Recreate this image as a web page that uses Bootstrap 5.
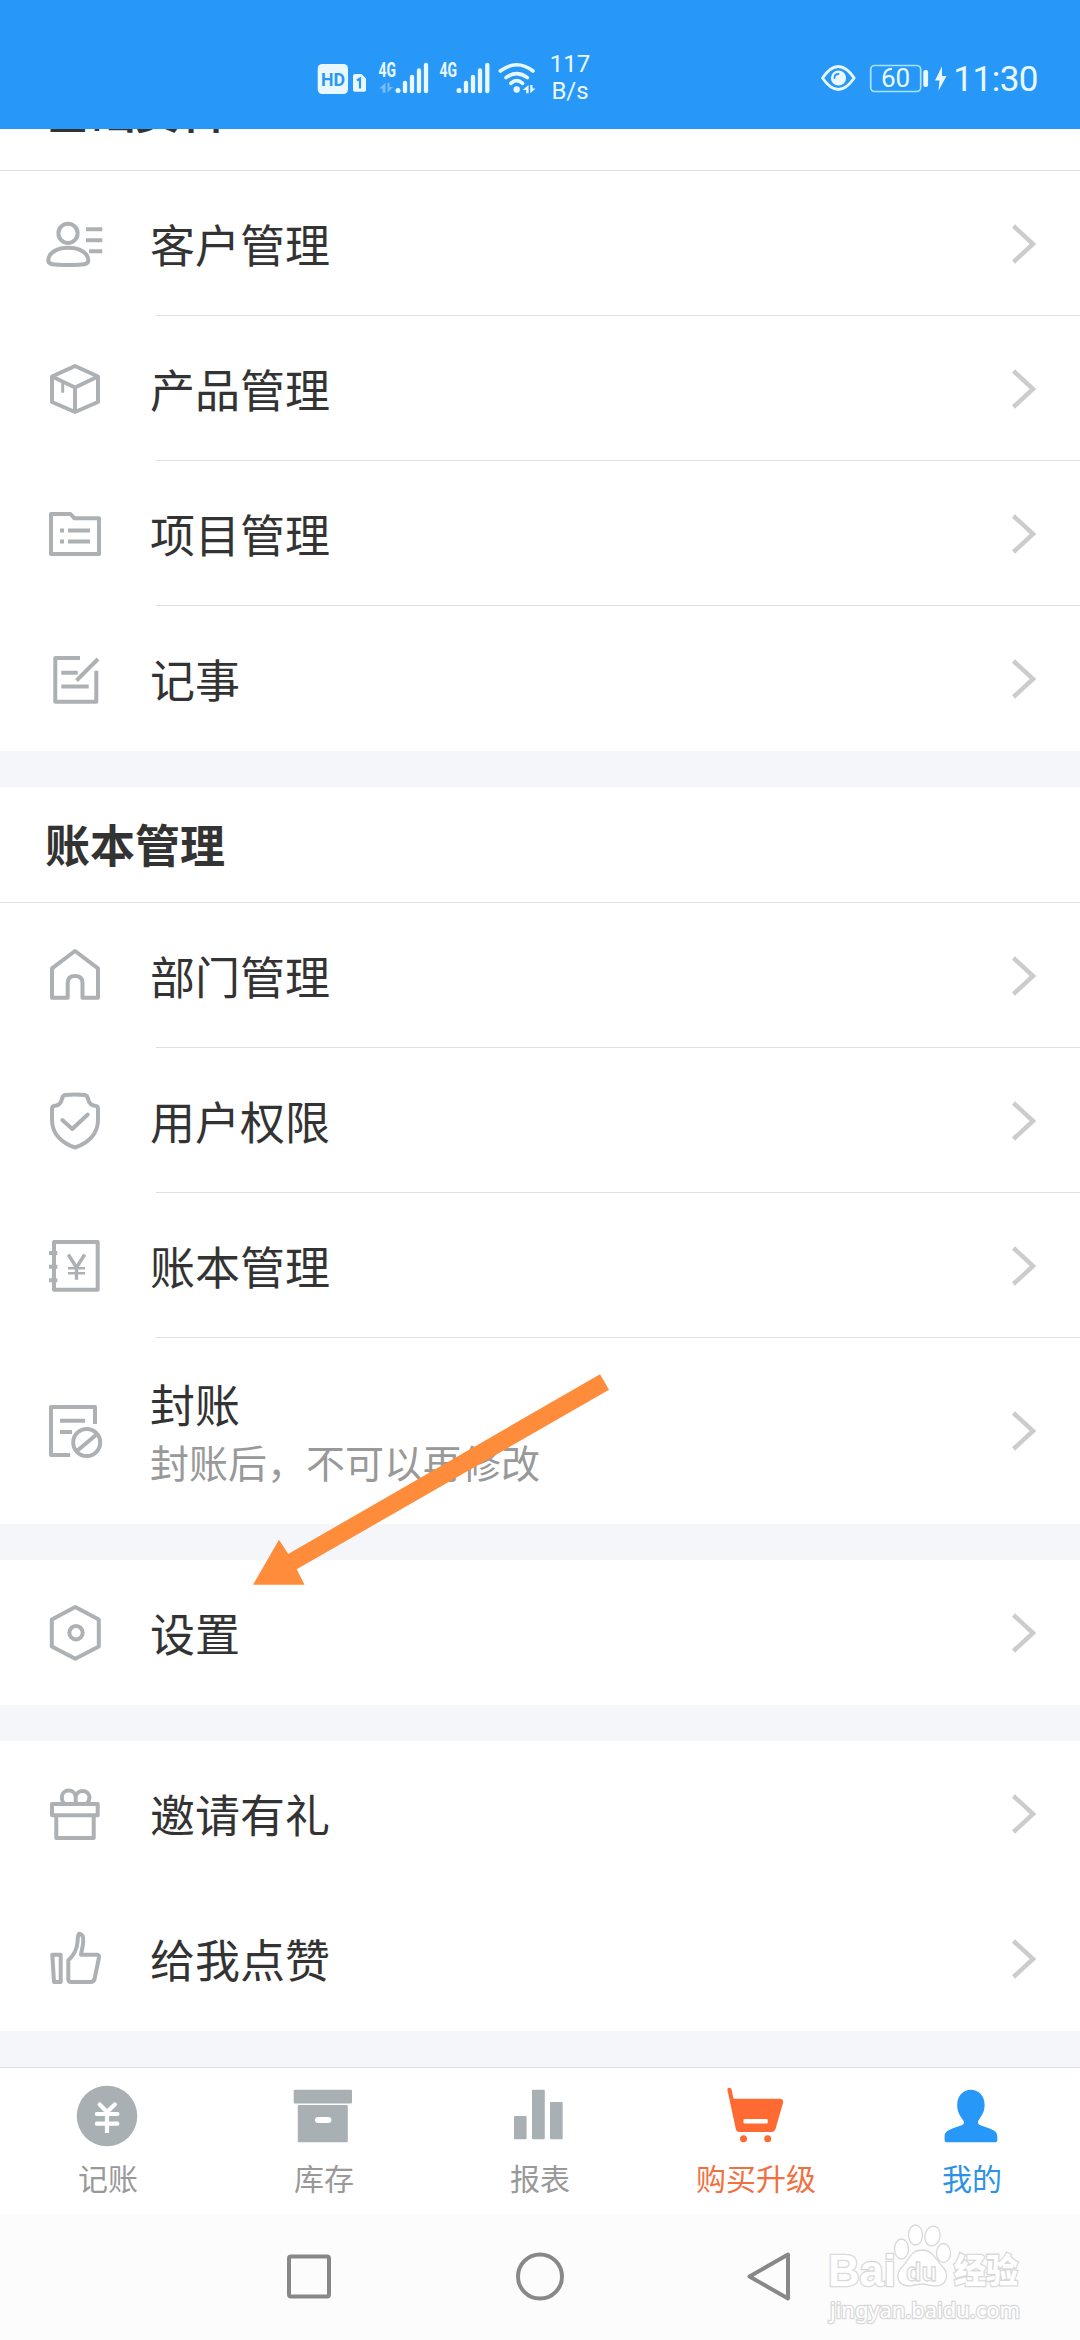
<!DOCTYPE html>
<html lang="zh-CN">
<head>
<meta charset="utf-8">
<meta name="viewport" content="width=device-width, initial-scale=1">
<title>我的</title>
<link rel="stylesheet" href="https://cdn.jsdelivr.net/npm/bootstrap@5.3.0/dist/css/bootstrap.min.css">
<style>
  body { width: 1080px; height: 2340px; overflow: hidden; background: #f5f6fa; color: #333; font-family: Roboto, "Noto Sans CJK SC", sans-serif; }
  svg { display: block; flex: none; }
  .statusbar { height: 129px; background: #2898f8; color: #e9f8ff; padding: 50px 42px 0 310px; }
  .statusbar > svg { margin-top: 5px; }
  .statusbar svg text { font-family: Roboto, sans-serif; }
  .rate { width: 60px; font-size: 24px; line-height: 27px; margin-left: -12px; margin-top: 1px; }
  .clock { font-size: 35px; line-height: 45px; letter-spacing: -.5px; margin-top: 6.5px; margin-left: 2px; }
  .block-title { height: 116px; padding: 6px 45px 0; font-size: 45px; font-weight: 700; line-height: 1; border-bottom: 1px solid #dedfe0; }
  .clipped { height: 42px; overflow: hidden; }
  .clipped > .block-title { flex: none; width: 100%; padding-top: 2px; }
  .entry { height: 145px; padding: 0 43px 0 45px; font-size: 45px; line-height: 1; }
  .entry-tall { height: 186px; }
  .entry > svg { stroke: #adb1b4; stroke-width: 4; fill: none; stroke-linejoin: round; }
  .entry > svg.chev { stroke: #ccc; stroke-width: 4.5; stroke-linejoin: miter; margin-left: auto; }
  .entry-label { margin-left: 45px; padding-top: 7px; }
  .entry-note { font-size: 39px; color: #999; margin-top: 16px; }
  .rule { height: 1px; margin: -1px 0 0 156px; background: #dedfe0; }
  .tabs { height: 147px; border-top: 1px solid #dcdfe3; }
  .tab-entry { width: 216px; padding-top: 16px; font-size: 30px; line-height: 30px; color: #999; }
  .tab-entry span { margin-top: 17px; }
  .tab-entry svg { fill: #a9b0b4; }
  .sysnav { height: 126px; background: #fcfcfc; padding: 0 0 0 279px; gap: 170.5px; }
  .sysnav svg { fill: none; stroke: #888; stroke-width: 4; stroke-linejoin: round; }
  .pointer { left: 245px; top: 1365px; }
  .wmark { left: 822px; top: 2216px; }
</style>
</head>
<body class="position-relative d-flex flex-column">

<header class="statusbar d-flex align-items-start">
  <svg width="242" height="45" viewBox="0 0 242 45" fill="#e9f8ff">
    <rect x="7.7" y="9" width="30.3" height="30" rx="4.5"/>
    <text x="11" y="31" font-size="19" font-weight="700" fill="#2898f8" textLength="24" lengthAdjust="spacingAndGlyphs">HD</text>
    <path d="M45 19H51.5L56 23.5V35Q56 36.7 54 36.7H45Q43 36.7 43 35V21Q43 19 45 19Z"/>
    <path d="M47 25.5L50 23.5V33.5" fill="none" stroke="#2898f8" stroke-width="2.2"/>
    <text x="68.5" y="21.7" font-size="19.5" font-weight="700" textLength="17.5" lengthAdjust="spacingAndGlyphs">4G</text>
    <path d="M75.5 27.7V37.7H72.5V33.5H69.3ZM77.5 37.7V27.7H79.5V32H83Z" opacity=".4"/>
    <circle cx="88" cy="35.4" r="2.5"/>
    <path d="M95 27.8V36.2M102 21.8V36.2M109 15.4V36.2M116 9.8V36.2" fill="none" stroke="#e9f8ff" stroke-width="4.3" stroke-linecap="round"/>
    <text x="129.5" y="21.7" font-size="19.5" font-weight="700" textLength="17.5" lengthAdjust="spacingAndGlyphs">4G</text>
    <circle cx="149" cy="35.4" r="2.5"/>
    <path d="M156 27.8V36.2M163 21.8V36.2M170 15.4V36.2M177.3 9.8V36.2" fill="none" stroke="#e9f8ff" stroke-width="4.3" stroke-linecap="round"/>
    <path d="M190.3 16Q206.7 3.5 223 16M196 22.6Q206.7 14.5 217.4 22.6M200.8 28.3Q206.7 23 212.6 28.3" fill="none" stroke="#e9f8ff" stroke-width="3.6" stroke-linecap="round"/>
    <circle cx="206.7" cy="34.5" r="3.2"/>
    <path d="M218.6 30V38.3H216.2V35H212.6ZM220.3 38.3V30H222.5V33.5H225.6Z"/>
  </svg>
  <div class="rate text-center">117<br>B/s</div>
  <svg class="ms-auto" width="139" height="45" viewBox="4 0 139 45" fill="#e9f8ff">
    <path d="M14.5 23Q30.3 0 46.2 23Q30.3 46 14.5 23Z" fill="none" stroke="#e9f8ff" stroke-width="2.8" stroke-linejoin="round"/>
    <circle cx="30.5" cy="23" r="7.6"/>
    <path d="M26.5 23Q26.5 19 30.5 19" fill="none" stroke="#2898f8" stroke-width="1.8" stroke-linecap="round"/>
    <rect x="62.7" y="10.5" width="50" height="26" rx="4" fill="none" stroke="#a9e3fa" stroke-width="1.7"/>
    <text x="73" y="31.5" font-size="26">60</text>
    <rect x="115.3" y="15" width="4.8" height="17" rx="2"/>
    <path d="M134 11.3L127 25.5H131.5L130.5 35.7L138.5 21H134Z"/>
  </svg>
  <div class="clock">11:30</div>
</header>

<main class="flex-grow-1">
  <section class="bg-white">
    <div class="clipped d-flex align-items-end"><div class="block-title d-flex align-items-center">基础资料</div></div>
    <div class="entry d-flex align-items-center">
      <svg width="60" height="60"><circle cx="23" cy="19.3" r="9.6"/><path d="M3.3 46.5C3.3 39.500 11 33.700 23.300 33.700S43.300 39.500 43.300 46.500C43.300 50.500 39 51 23.300 51S3.300 50.500 3.300 46.500ZM41 15.300H57.300M41 26.300H57.300M44 37.300H57.300"/></svg>
      <div class="entry-label">客户管理</div>
      <svg class="chev" width="26" height="44"><path d="M2.500 4L22 22L2.500 40"/></svg>
    </div>
    <div class="rule"></div>
    <div class="entry d-flex align-items-center">
      <svg width="60" height="60"><path d="M30 7L53 17.500V43L30 53L7 43V17.500ZM7 17.500L30 28.500L53 17.500M30 28.500V53"/><path d="M17.700 24V33.700" stroke-width="3"/></svg>
      <div class="entry-label">产品管理</div>
      <svg class="chev" width="26" height="44"><path d="M2.500 4L22 22L2.500 40"/></svg>
    </div>
    <div class="rule"></div>
    <div class="entry d-flex align-items-center">
      <svg width="60" height="60"><path d="M6 10H25.500L29.500 14.300H54V50H6ZM15 26.600H19M23 26.600H45M15 37.400H19M23 37.400H45"/></svg>
      <div class="entry-label">项目管理</div>
      <svg class="chev" width="26" height="44"><path d="M2.500 4L22 22L2.500 40"/></svg>
    </div>
    <div class="rule"></div>
    <div class="entry d-flex align-items-center">
      <svg width="60" height="60"><path d="M35 9H10.300V52.700H51.300V21.700M16.300 23.700H32.700M16.300 37.400H43.700M53 10L31.500 31.500"/></svg>
      <div class="entry-label">记事</div>
      <svg class="chev" width="26" height="44"><path d="M2.500 4L22 22L2.500 40"/></svg>
    </div>
  </section>

  <section class="bg-white" style="margin-top:36px">
    <div class="block-title d-flex align-items-center">账本管理</div>
    <div class="entry d-flex align-items-center">
      <svg width="60" height="60"><path d="M30 5L53 22.300V51.700H37.500V37Q37.500 30 30 30Q22.700 30 22.700 37V51.700H7V22.300Z"/></svg>
      <div class="entry-label">部门管理</div>
      <svg class="chev" width="26" height="44"><path d="M2.500 4L22 22L2.500 40"/></svg>
    </div>
    <div class="rule"></div>
    <div class="entry d-flex align-items-center">
      <svg width="60" height="60"><path d="M20 4Q30 2.800 40 4Q42.500 4.500 43 8Q44.500 14.500 51 15Q53 15.200 53 18V29C53 43 43 52 30 56.500C17 52 7 43 7 29V18Q7 15.200 9 15Q15.500 14.500 17 8Q17.500 4.500 20 4Z"/><path d="M17.300 29L27.300 38L42.700 23.500" stroke-linecap="round"/></svg>
      <div class="entry-label">用户权限</div>
      <svg class="chev" width="26" height="44"><path d="M2.500 4L22 22L2.500 40"/></svg>
    </div>
    <div class="rule"></div>
    <div class="entry d-flex align-items-center">
      <svg width="60" height="60"><path d="M9 6H52.700V53.700H9ZM4 17H12.300M4 30.700H12.300M4 44.300H12.300"/><path d="M23.300 18.500L31.500 31.500L39.700 18.500M31.500 31V43.700" stroke-width="3.400"/><path d="M23 32.300H40M23 37.300H40" stroke-width="2.400"/></svg>
      <div class="entry-label">账本管理</div>
      <svg class="chev" width="26" height="44"><path d="M2.500 4L22 22L2.500 40"/></svg>
    </div>
    <div class="rule"></div>
    <div class="entry entry-tall d-flex align-items-center">
      <svg width="60" height="60"><path d="M25.200 54H6V6H50V23M15 19.700H40M15 31H27M32.500 49.500L51 34"/><circle cx="41.700" cy="41.500" r="13.500"/></svg>
      <div class="entry-label">封账<div class="entry-note">封账后，不可以再修改</div></div>
      <svg class="chev" width="26" height="44"><path d="M2.500 4L22 22L2.500 40"/></svg>
    </div>
  </section>

  <section class="bg-white" style="margin-top:36px">
    <div class="entry d-flex align-items-center">
      <svg width="60" height="60"><path d="M30.300 4L53.800 16.500V43.500L30.300 55.700L6.800 43.500V16.500Z"/><circle cx="31" cy="29.700" r="6.700"/></svg>
      <div class="entry-label">设置</div>
      <svg class="chev" width="26" height="44"><path d="M2.500 4L22 22L2.500 40"/></svg>
    </div>
  </section>

  <section class="bg-white" style="margin-top:36px">
    <div class="entry d-flex align-items-center">
      <svg width="60" height="60"><path d="M7 20H52.700V31.300H7ZM11.300 31.300V54H48.700V31.300M18.500 19Q16.500 16 16.800 12.700A7 7 0 0 1 30.700 12.700V20M30.700 12.700A7 7 0 0 1 44.500 12.700Q44.500 16 42.500 19"/></svg>
      <div class="entry-label">邀请有礼</div>
      <svg class="chev" width="26" height="44"><path d="M2.500 4L22 22L2.500 40"/></svg>
    </div>
    <div class="entry d-flex align-items-center">
      <svg width="60" height="60"><path d="M7.300 25.700H15.700V53H9ZM23.300 31.500C28 27 32 21 32.500 13C32.700 9 33 4.700 34.500 4.700C37.500 5 38.500 8.500 38.200 13C38 18 36.500 21.500 36 25.700H51.500Q54.500 25.700 54 28.500L49.500 50Q48.500 53 46 53H26.500Q23.300 53 23.300 50Z"/></svg>
      <div class="entry-label">给我点赞</div>
      <svg class="chev" width="26" height="44"><path d="M2.500 4L22 22L2.500 40"/></svg>
    </div>
  </section>
</main>

<nav class="tabs bg-white d-flex">
  <div class="tab-entry d-flex flex-column align-items-center">
    <svg width="64" height="64"><circle cx="31" cy="32" r="30.300"/><path d="M23.700 20.500L31 28L38.800 20.500M20.800 30H41.400M20.800 39.700H41.400" fill="none" stroke="#fff" stroke-width="4.200" stroke-linecap="round"/><path d="M31 28V49" stroke="#fff" stroke-width="4.200"/></svg>
    <span>记账</span>
  </div>
  <div class="tab-entry d-flex flex-column align-items-center">
    <svg width="64" height="64"><rect x="1.700" y="5.700" width="58.300" height="13.800" rx="1"/><rect x="5.800" y="21" width="50" height="37.300" rx="1"/><rect x="23" y="33" width="16.300" height="6" rx="3" fill="#fff"/></svg>
    <span>库存</span>
  </div>
  <div class="tab-entry d-flex flex-column align-items-center">
    <svg width="64" height="64"><rect x="6" y="32" width="12.600" height="23.300" rx="1"/><rect x="24" y="5.700" width="12.800" height="49.600" rx="1"/><rect x="42" y="18" width="12.700" height="37.300" rx="1"/></svg>
    <span>报表</span>
  </div>
  <div class="tab-entry d-flex flex-column align-items-center" style="color:#f0713f">
    <svg width="64" height="64" style="fill:#ff6a33"><path d="M3.300 5.500Q3.300 3.700 5.300 3.700Q7.200 3.700 7.700 6L9.500 14.700H55.500Q60 14.700 59 19L51.500 45Q50.500 48 47.500 48H15.500Q12.500 48 11.800 45Z"/><rect x="19.500" y="35" width="24.200" height="4.500" rx="1" fill="#fff"/><circle cx="19.500" cy="54.700" r="3.500"/><circle cx="43.700" cy="54.700" r="3.500"/></svg>
    <span>购买升级</span>
  </div>
  <div class="tab-entry d-flex flex-column align-items-center" style="color:#2d92e6">
    <svg width="64" height="64" style="fill:#2898f8"><path d="M30.900 5.700C39 5.700 44.600 12 44.600 21C44.600 29 41 32 38 37.500C37.700 40 38.500 40.500 41 41.500C49 44.500 57.300 46 57.300 52V56.500Q57.300 58.300 55.500 58.300H6.500Q4.600 58.300 4.600 56.500V52C4.600 46 13 44.500 21 41.500C23.500 40.500 24.200 40 23.900 37.500C20.500 32 17.200 29 17.200 21C17.200 12 23 5.700 30.900 5.700Z"/></svg>
    <span>我的</span>
  </div>
</nav>

<footer class="sysnav d-flex align-items-center">
  <svg width="60" height="60"><rect x="10" y="9.500" width="40" height="40" rx="2"/></svg>
  <svg width="60" height="60"><circle cx="30" cy="29.500" r="22"/></svg>
  <svg width="60" height="60"><path d="M48 7.500V51.500L9.500 29.500Z" stroke-linejoin="round"/></svg>
</footer>

<svg class="pointer position-absolute" width="370" height="225" viewBox="245 1365 370 225"><path d="M253 1584.700L279 1539.700L288.200 1554L600 1374.300L609 1389.700L296.700 1569.300L304.500 1584.700Z" fill="#ff8c3a"/></svg>

<svg class="wmark position-absolute" width="210" height="115" viewBox="820 2216 210 115" fill="#fff" stroke="#d9d9d9" stroke-width="1.300" font-family="'Liberation Sans','Noto Sans CJK SC',sans-serif">
  <g style="paint-order:stroke" stroke-width="2.600">
    <text x="826" y="2286" font-size="44" font-weight="700" textLength="68" lengthAdjust="spacingAndGlyphs">Bai</text>
    <text x="952" y="2283" font-size="34" font-weight="900" textLength="64" lengthAdjust="spacingAndGlyphs" font-family="'Noto Sans CJK SC',sans-serif">经验</text>
    <text x="828" y="2318" font-size="22" textLength="190" lengthAdjust="spacingAndGlyphs" font-family="'Noto Sans',sans-serif">jingyan.baidu.com</text>
  </g>
  <ellipse cx="899.500" cy="2249" rx="7" ry="10"/><ellipse cx="913.500" cy="2235" rx="7" ry="10"/><ellipse cx="930.500" cy="2236" rx="7.500" ry="10" transform="rotate(12 930.500 2236)"/><ellipse cx="941.500" cy="2253" rx="7" ry="9.500"/>
  <path d="M920 2250C931 2250 934 2260 940 2266C948 2274 945 2286 933 2286C928 2286 924 2284 920 2284S910 2286 906 2286C895 2285 893 2274 900 2267C907 2260 909 2250 920 2250Z"/>
  <text x="904" y="2281" font-size="26" font-weight="700" textLength="31" lengthAdjust="spacingAndGlyphs">du</text>
</svg>

<script src="https://cdn.jsdelivr.net/npm/bootstrap@5.3.0/dist/js/bootstrap.bundle.min.js"></script>
</body>
</html>
